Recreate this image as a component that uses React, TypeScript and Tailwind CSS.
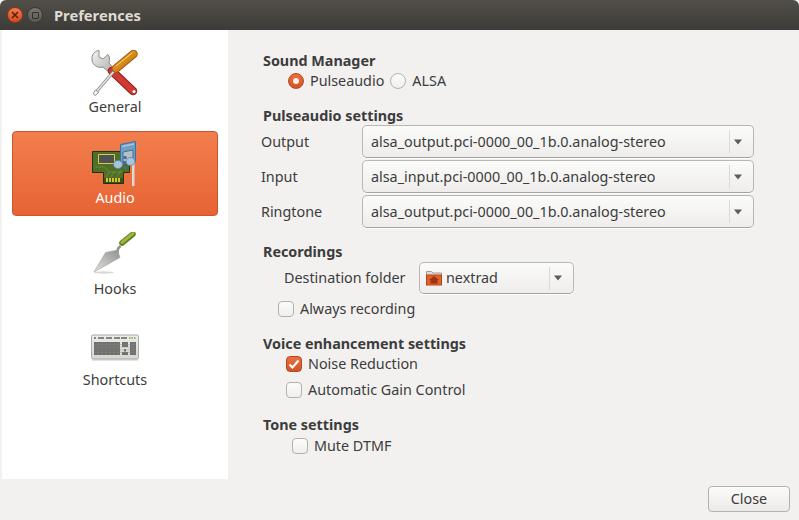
import React from 'react';

const ToolsIcon = () => (
  <svg width="48" height="48" viewBox="0 0 48 48">
    <defs>
      <linearGradient id="orangeHandle" x1="0" y1="0" x2="1" y2="1">
        <stop offset="0" stopColor="#f0b429" />
        <stop offset="1" stopColor="#b9650f" />
      </linearGradient>
      <linearGradient id="silver" x1="0" y1="0" x2="1" y2="1">
        <stop offset="0" stopColor="#f4f4f2" />
        <stop offset="1" stopColor="#a5a7a3" />
      </linearGradient>
    </defs>
    {/* wrench */}
    <path d="M8 .5C3 1 .5 5 1 10c.5 5 5.500 8.500 11 7l9 8 4-4-7-8c1-3.500.5-7-1-8.500L12 9 8 7z" fill="url(#silver)" stroke="#8c8d8a" strokeWidth="1" />
    <path d="M21 21l21 20" stroke="#8f1f1c" strokeWidth="8.500" strokeLinecap="round" />
    <path d="M21 21l21 20" stroke="#cf3a34" strokeWidth="6.500" strokeLinecap="round" />
    <circle cx="43" cy="41.500" r="1.500" fill="#fff" />
    {/* screwdriver */}
    <path d="M24 20L6 41" stroke="#858783" strokeWidth="3" />
    <path d="M24 20L6 41" stroke="#e6e7e4" strokeWidth="1.500" />
    <path d="M4.500 40l3 2.500-2.500 2.500c-1.500.8-3-.6-2.400-2.200z" fill="#f4f4f2" stroke="#777" strokeWidth="0.800" />
    <path d="M25 18.500L42.500 4" stroke="#a6560d" strokeWidth="8.500" strokeLinecap="round" />
    <path d="M25 18.500L42.500 4" stroke="url(#orangeHandle)" strokeWidth="6.500" strokeLinecap="round" />
    <path d="M25 16L41 3" stroke="#f7d46b" strokeWidth="1" />
  </svg>
);

const AudioIcon = () => (
  <svg width="48" height="48" viewBox="0 0 48 48">
    {/* sound card */}
    <path d="M1.500 10.500h37v21h-6v11h-20v-11h-11z" fill="#4f6f26" stroke="#22330c" strokeWidth="1" />
    <path d="M13 37h19v5H13z" fill="#3c4f15" />
    <path d="M15 37h2v4h-2zM18 37h2v4h-2zM21 37h2v4h-2zM24 37h2v4h-2zM27 37h2v4h-2z" fill="#d8c52e" />
    <path d="M4 26h9l5 5h13M26 36l4-7M20 36l3-6M15 36l3-5" stroke="#6f9338" strokeWidth="0.800" fill="none" />
    <rect x="7" y="13" width="17" height="10" rx="1" fill="#d8c94a" />
    <rect x="8" y="14" width="15" height="8" fill="#4f5254" />
    {/* note */}
    <rect x="41" y="22" width="2.500" height="23" fill="#d9dbd8" />
    <rect x="44" y="3" width="2.500" height="3" fill="#9aa0a3" />
    <rect x="31" y="8" width="12" height="12" fill="#b9bfc2" />
    <path d="M29.500 3.500L44.500 .5V21h-2.500V9l-10 2v12h-2.500z" fill="#6f9fc6" stroke="#3f6f9c" strokeWidth="1" />
    <path d="M31 5.500l12-2.500" stroke="#a7c6dd" strokeWidth="1.500" />
    <rect x="32.500" y="15" width="3" height="3" fill="#3f6f9c" />
    <rect x="32.500" y="20" width="3" height="3" fill="#3f6f9c" />
    <rect x="32.500" y="25" width="3" height="3" fill="#3f6f9c" />
    <ellipse cx="27" cy="23.500" rx="4.500" ry="4" fill="#a7c6dd" stroke="#5a87ab" strokeWidth="0.800" />
    <ellipse cx="39.500" cy="20.500" rx="4.500" ry="4" fill="#a7c6dd" stroke="#5a87ab" strokeWidth="0.800" />
  </svg>
);

const TrowelIcon = () => (
  <svg width="48" height="48" viewBox="0 0 48 48">
    <defs>
      <linearGradient id="blade" x1="0" y1="1" x2="1" y2="0">
        <stop offset="0" stopColor="#e2e3e0" />
        <stop offset="1" stopColor="#8f918d" />
      </linearGradient>
    </defs>
    <ellipse cx="13" cy="40.500" rx="10" ry="1.200" fill="#d8d8d6" />
    <path d="M29.500 14l-2.500 2.500-.5 5" stroke="#8f918d" strokeWidth="2.500" fill="none" />
    <path d="M3 40L14.500 20.500l12-2.500 2.500 7.500z" fill="url(#blade)" stroke="#a2a4a0" strokeWidth="0.600" />
    <path d="M31 11L42 2" stroke="#5f7a1c" strokeWidth="5.500" strokeLinecap="round" />
    <path d="M31 10.500L42 1.500" stroke="#9ab83a" strokeWidth="3" strokeLinecap="round" />
  </svg>
);

const KeyboardIcon = () => (
  <svg width="48" height="48" viewBox="0 0 48 48">
    <defs>
      <linearGradient id="kbBody" x1="0" y1="0" x2="0" y2="1">
        <stop offset="0" stopColor="#ecece9" />
        <stop offset="1" stopColor="#d6d6d3" />
      </linearGradient>
    </defs>
    <rect x="1" y="36" width="46" height="2" fill="#e4e4e2" />
    <rect x="0.500" y="12" width="47" height="24" rx="1.500" fill="url(#kbBody)" stroke="#a9aaa7" strokeWidth="1" />
    <path d="M3 15h2M7 15h6M15 15h6M23 15h6M30 15h6" stroke="#646462" strokeWidth="1.500" />
    <path d="M38 15h1.500M40.500 15h1.500M43 15h1.500" stroke="#6fae3c" strokeWidth="1.500" />
    <rect x="3" y="19" width="26" height="13" fill="#6f6f6d" />
    <rect x="31" y="19" width="6" height="5" fill="#6f6f6d" />
    <rect x="33" y="26" width="2" height="2.500" fill="#6f6f6d" />
    <rect x="31" y="29" width="6" height="3" fill="#6f6f6d" />
    <rect x="39" y="19" width="6" height="13" fill="#6f6f6d" />
    <path d="M3 21.500h42M3 24.200h42M3 26.800h42M3 29.400h42M7 19v13M11 19v13M15 19v13M19 19v13M23 19v13M27 19v13M41 19v13M43 19v13" stroke="#8c8c8a" strokeWidth="0.400" />
  </svg>
);

const FolderIcon = () => (
  <svg width="16" height="16" viewBox="0 0 16 16" className="shrink-0">
    <path d="M.5 1.500h5l1.500 1.500h8.500v3H.5z" fill="#dedbd3" stroke="#a09b90" strokeWidth="1" />
    <rect x="0.500" y="5" width="15" height="10" fill="#e0612c" stroke="#b5481a" strokeWidth="1" />
    <path d="M8 6l5 4h-1.500v3.500h-7V10H3z" fill="#9a3510" />
  </svg>
);

const Caret = () => (
  <svg width="8" height="6" viewBox="0 0 8 6">
    <path d="M0 .5h8L4 5.500z" fill="#5d5d5b" />
  </svg>
);

const Combo = ({ value, className, icon }: { value: string; className: string; icon?: boolean }) => (
  <div className={`flex items-center rounded-[5px] border border-[#b9b7b2] border-b-[#a5a39e] bg-gradient-to-b from-[#fbfbfa] to-[#eeedeb] shadow-[0_1px_0_#ffffff] text-[#3c3c3c] ${className}`}>
    <div className={`flex-1 flex items-center gap-[4px] min-w-0 whitespace-nowrap ${icon ? 'pl-[6px]' : 'pl-[8px]'}`}>
      {icon && <FolderIcon />}
      <span>{value}</span>
    </div>
    <div className="w-[24px] h-[23px] flex items-center justify-center pr-[8px] border-l border-[#dcdad6] shrink-0">
      <Caret />
    </div>
  </div>
);

const Check = ({ checked }: { checked?: boolean }) => (
  <span className={`w-[16px] h-[16px] rounded-[4px] border shrink-0 flex items-center justify-center ${checked ? 'border-[#b04a24] bg-gradient-to-b from-[#ec6f3e] to-[#cf5528]' : 'border-[#b3b1ac] bg-gradient-to-b from-[#fbfbfa] to-[#f0efed]'}`}>
    {checked && (
      <svg width="12" height="12" viewBox="0 0 12 12">
        <path d="M1.500 6.500L4.500 9.500L10.500 2.500" stroke="#fff" strokeWidth="2.200" fill="none" />
      </svg>
    )}
  </span>
);

const Radio = ({ checked }: { checked?: boolean }) => (
  <span className={`w-[16px] h-[16px] rounded-full border shrink-0 flex items-center justify-center ${checked ? 'border-[#b04a24] bg-gradient-to-b from-[#ec6f3e] to-[#cf5528]' : 'border-[#b3b1ac] bg-gradient-to-b from-[#fbfbfa] to-[#f0efed]'}`}>
    {checked && <span className="w-[6px] h-[6px] rounded-full bg-[#fbeee8]" />}
  </span>
);

const Heading = ({ children, className = '' }: { children: React.ReactNode; className?: string }) => (
  <div className={`h-[20px] leading-[20px] pl-[35px] font-bold text-[#3c3c3c] ${className}`}>{children}</div>
);

const SideItem = ({ label, icon, active }: { label: string; icon: React.ReactNode; active?: boolean }) => (
  <div className={`h-[85px] flex flex-col items-center pt-[10px] rounded-[4px] border ${active ? 'bg-gradient-to-b from-[#f27e4d] to-[#e76334] border-[#c9572c] text-white' : 'border-transparent text-[#3c3c3c]'}`}>
    <div className="w-[48px] h-[48px] -mt-[1px]">{icon}</div>
    <div className="h-[20px] leading-[20px] -mt-[1px]">{label}</div>
  </div>
);

const ComboRow = ({ label, value }: { label: string; value: string }) => (
  <div className="flex items-center h-[33px] pl-[33px]">
    <span className="w-[101px] text-[#3c3c3c]">{label}</span>
    <Combo value={value} className="w-[392px] h-[33px]" />
  </div>
);

const Label = ({ children, className = 'ml-[6px]' }: { children: React.ReactNode; className?: string }) => (
  <span className={`whitespace-nowrap ${className}`}>{children}</span>
);

export default function App() {
  return (
    <div className="w-[799px] h-[520px] flex flex-col overflow-hidden bg-[#f2f1f0] text-[14.35px]" style={{ fontFamily: '"Noto Sans", sans-serif' }}>
      {/* title bar */}
      <div className="h-[30px] shrink-0 flex items-center rounded-t-[6px] bg-gradient-to-b from-[#524f49] to-[#3c3b37] pl-[7px]">
        <span className="w-[16px] h-[16px] rounded-full bg-gradient-to-b from-[#f4794a] to-[#dd4814] border border-[#8a3a1e] flex items-center justify-center">
          <svg width="8" height="8" viewBox="0 0 8 8">
            <path d="M1 1l6 6M7 1L1 7" stroke="#4a2115" strokeWidth="1.500" />
          </svg>
        </span>
        <span className="w-[16px] h-[16px] rounded-full ml-[4px] bg-gradient-to-b from-[#77756f] to-[#5c5a55] border border-[#3a3935] flex items-center justify-center">
          <span className="w-[7px] h-[7px] border border-[#2f2e2b] rounded-[1px]" />
        </span>
        <span className="ml-[11px] font-bold text-[#dfdbd2] text-[14.7px]">Preferences</span>
      </div>

      <div className="flex-1 flex min-h-0">
        {/* sidebar */}
        <div className="w-[226px] ml-[2px] bg-white shrink-0 px-[10px] pt-[10px] flex flex-col gap-[6px]">
          <SideItem label="General" icon={<ToolsIcon />} />
          <SideItem label="Audio" icon={<AudioIcon />} active />
          <SideItem label="Hooks" icon={<TrowelIcon />} />
          <SideItem label="Shortcuts" icon={<KeyboardIcon />} />
        </div>

        {/* settings */}
        <div className="flex-1 flex flex-col pt-[21px] text-[#3c3c3c]">
          <Heading>Sound Manager</Heading>
          <div className="h-[20px] flex items-center pl-[60px]">
            <Radio checked />
            <Label>Pulseaudio</Label>
            <span className="ml-[6px]"><Radio /></span>
            <Label>ALSA</Label>
          </div>
          <Heading className="mt-[15px] -mb-[1px]">Pulseaudio settings</Heading>
          <div className="flex flex-col gap-[2px]">
            <ComboRow label="Output" value="alsa_output.pci-0000_00_1b.0.analog-stereo" />
            <ComboRow label="Input" value="alsa_input.pci-0000_00_1b.0.analog-stereo" />
            <ComboRow label="Ringtone" value="alsa_output.pci-0000_00_1b.0.analog-stereo" />
          </div>
          <Heading className="mt-[14px]">Recordings</Heading>
          <div className="flex items-center h-[32px] pl-[56px]">
            <Label className="w-[135px]">Destination folder</Label>
            <Combo value="nextrad" icon className="w-[155px] h-[32px]" />
          </div>
          <div className="h-[20px] mt-[5px] flex items-center pl-[50px]">
            <Check />
            <Label>Always recording</Label>
          </div>
          <Heading className="mt-[15px]">Voice enhancement settings</Heading>
          <div className="h-[20px] flex items-center pl-[58px]">
            <Check checked />
            <Label>Noise Reduction</Label>
          </div>
          <div className="h-[20px] mt-[6px] flex items-center pl-[58px]">
            <Check />
            <Label>Automatic Gain Control</Label>
          </div>
          <Heading className="mt-[15px]">Tone settings</Heading>
          <div className="h-[20px] mt-[1px] flex items-center pl-[64px]">
            <Check />
            <Label>Mute DTMF</Label>
          </div>
        </div>
      </div>

      {/* footer */}
      <div className="h-[41px] shrink-0 flex justify-end pt-[7px] pr-[9px]">
        <button className="w-[82px] h-[26px] rounded-[4px] border border-[#b3b1ac] bg-gradient-to-b from-[#fbfbfa] to-[#ebeae8] text-[#3c3c3c] text-[14.35px]">Close</button>
      </div>
    </div>
  );
}
